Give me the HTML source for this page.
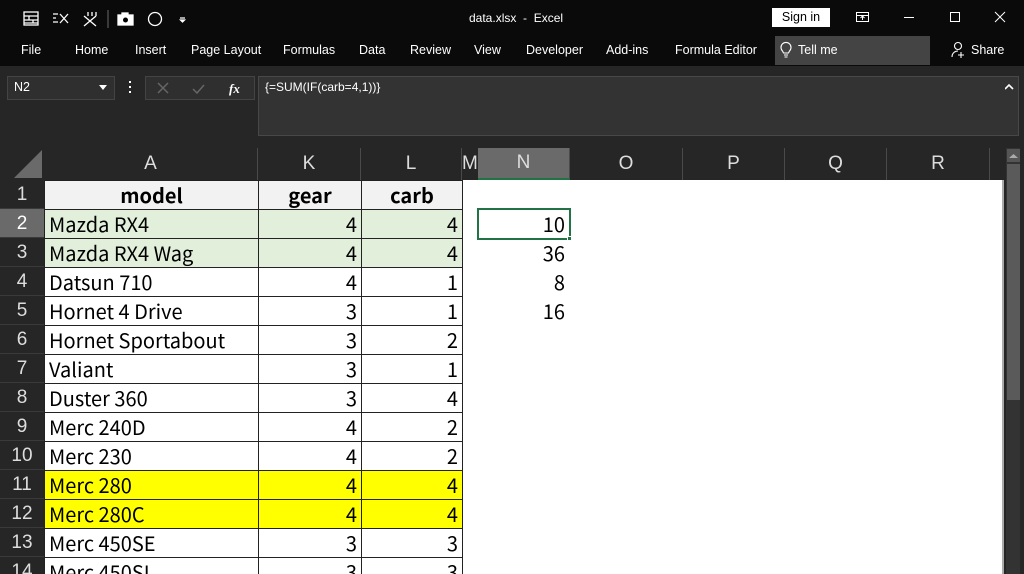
<!DOCTYPE html>
<html style="width:1024px;height:574px;overflow:hidden"><head><meta charset="utf-8"><style>
*{margin:0;padding:0;box-sizing:border-box}
body{width:1024px;height:574px;overflow:hidden;background:#262626;font-family:"Segoe UI","Liberation Sans","Noto Sans CJK KR",sans-serif;position:relative;color:#fff}
.a{position:absolute}
.t{font-size:12.5px;color:#fff;white-space:nowrap}
.hd{position:absolute;top:148px;height:32px;font-size:19px;color:#ddd;text-align:center;line-height:32px;border-right:1px solid #4a4a4a}
.rh{position:absolute;left:0;width:44px;height:29px;font-size:19px;color:#ddd;text-align:center;line-height:29px;border-bottom:1px solid #3a3a3a}
.c{position:absolute;height:30px;border:1px solid #222;font-size:20px;color:#000;line-height:28px;padding:0 4px;white-space:nowrap;overflow:hidden;font-family:"Noto Sans CJK KR","Liberation Sans",sans-serif}
.r{text-align:right}
</style></head><body>
<div class="a" style="left:0;top:0;width:1024px;height:66px;background:#0a0a0a"></div>
<svg class="a" style="left:20px;top:8px" width="180" height="22" viewBox="0 0 180 22" fill="none" stroke="#fff" stroke-width="1.3">
<rect x="4" y="4" width="14" height="13"/><path d="M4 8h14M4 12h14M4 15h14M9 8v4M13 12v3"/>
<path d="M33 6h5M33 10h3M33 14h5M40 6l8 9M48 6l-8 9"/>
<path d="M68 4v4M72 4v4M76 4v4M64 8l12 10M76 8l-12 10"/>
<line x1="88" y1="2" x2="88" y2="20" stroke="#555"/>
<rect x="98" y="7" width="15" height="10" fill="#fff"/><rect x="102" y="5" width="6" height="3" fill="#fff"/><circle cx="105.5" cy="12" r="2.5" fill="#000" stroke="none"/>
<circle cx="135" cy="11" r="6.5"/>
<path d="M160 10h5M160.5 12h4l-2 2z" fill="#fff"/>
</svg>
<div class="a t" style="left:469px;top:11px;font-size:12px">data.xlsx &nbsp;- &nbsp;Excel</div>
<div class="a" style="left:772px;top:8px;width:58px;height:19px;background:#fff;color:#000;font-size:12.5px;text-align:center;line-height:19px">Sign in</div>
<svg class="a" style="left:850px;top:8px" width="174" height="20" fill="none" stroke="#fff" stroke-width="1">
<rect x="6.5" y="4.5" width="12" height="9"/><path d="M6.5 7.5h12M12.5 12V8.5M10.5 10l2-2 2 2"/>
<path d="M54 9.5h10"/>
<rect x="100.5" y="4.5" width="9" height="9"/>
<path d="M145 4l10 10M155 4l-10 10"/>
</svg>
<div class="a t" style="left:21px;top:43px">File</div>
<div class="a t" style="left:75px;top:43px">Home</div>
<div class="a t" style="left:135px;top:43px">Insert</div>
<div class="a t" style="left:191px;top:43px">Page Layout</div>
<div class="a t" style="left:283px;top:43px">Formulas</div>
<div class="a t" style="left:359px;top:43px">Data</div>
<div class="a t" style="left:410px;top:43px">Review</div>
<div class="a t" style="left:474px;top:43px">View</div>
<div class="a t" style="left:526px;top:43px">Developer</div>
<div class="a t" style="left:606px;top:43px">Add-ins</div>
<div class="a t" style="left:675px;top:43px">Formula Editor</div>
<div class="a" style="left:775px;top:36px;width:155px;height:29px;background:#444"></div>
<svg class="a" style="left:779px;top:40px" width="14" height="20" fill="none" stroke="#fff" stroke-width="1.1"><path d="M3.5 11a5 5 0 1 1 7 0l-1 2h-5z"/><path d="M5 15h4M5.5 17h3"/></svg>
<div class="a t" style="left:798px;top:43px">Tell me</div>
<svg class="a" style="left:951px;top:41px" width="16" height="18" fill="none" stroke="#fff" stroke-width="1.1"><circle cx="7" cy="5" r="3.5"/><path d="M1 16c0-4 3-6 6-6M10 11v6M7 14h6"/></svg>
<div class="a t" style="left:971px;top:43px">Share</div>
<div class="a" style="left:7px;top:76px;width:108px;height:24px;background:#2f2f2f;border:1px solid #444"></div>
<div class="a t" style="left:14px;top:80px">N2</div>
<svg class="a" style="left:99px;top:85px" width="9" height="5"><path d="M0 0h8l-4 5z" fill="#fff"/></svg>
<div class="a" style="left:129px;top:81px;width:2px;height:2px;background:#fff;box-shadow:0 5px #fff,0 10px #fff"></div>
<div class="a" style="left:145px;top:76px;width:110px;height:24px;background:#2f2f2f;border:1px solid #444"></div>
<svg class="a" style="left:155px;top:80px" width="95" height="16" fill="none" stroke="#666" stroke-width="1.5"><path d="M3 3l10 10M13 3L3 13M38 9l4 4 7-8"/><text x="74" y="13" fill="#fff" stroke="none" font-size="13" font-style="italic" font-family="Liberation Serif" font-weight="bold">fx</text></svg>
<div class="a" style="left:258px;top:76px;width:761px;height:60px;background:#333;border:1px solid #484848"></div>
<div class="a t" style="left:265px;top:80px;font-size:12px">{=SUM(IF(carb=4,1))}</div>
<svg class="a" style="left:1005px;top:84px" width="9" height="6"><path d="M0 5l4-4 4 4" stroke="#fff" stroke-width="1.6" fill="none"/></svg>
<svg class="a" style="left:14px;top:150px" width="28" height="28"><path d="M28 0v28H0z" fill="#6a6a6a"/></svg>
<div class="hd" style="left:44px;width:214px">A</div>
<div class="hd" style="left:258px;width:103px">K</div>
<div class="hd" style="left:361px;width:101px">L</div>
<div class="hd" style="left:462px;width:16px;text-align:left;border:none">M</div>
<div class="hd" style="left:478px;width:92px;background:#6a6a6a;border-bottom:2px solid #217346;line-height:30px">N</div>
<div class="hd" style="left:570px;width:113px">O</div>
<div class="hd" style="left:683px;width:102px">P</div>
<div class="hd" style="left:785px;width:102px">Q</div>
<div class="hd" style="left:887px;width:103px">R</div>
<div class="a" style="left:44px;top:180px;width:958px;height:394px;background:#fff"></div>
<div class="a" style="left:1002px;top:180px;width:2px;height:394px;background:#aaa"></div>
<div class="a" style="left:1006px;top:148px;width:14px;height:426px;background:#333"></div>
<div class="a" style="left:1007px;top:149px;width:13px;height:13px;background:#555"></div>
<svg class="a" style="left:1009px;top:153px" width="9" height="5"><path d="M0 5l4.5-4 4.5 4z" fill="#aaa"/></svg>
<div class="a" style="left:1007px;top:164px;width:13px;height:236px;background:#5a5a5a"></div>
<div id="g"></div>
<script>
var d=[["model","gear","carb"],["Mazda RX4",4,4],["Mazda RX4 Wag",4,4],["Datsun 710",4,1],["Hornet 4 Drive",3,1],["Hornet Sportabout",3,2],["Valiant",3,1],["Duster 360",3,4],["Merc 240D",4,2],["Merc 230",4,2],["Merc 280",4,4],["Merc 280C",4,4],["Merc 450SE",3,3],["Merc 450SL",3,3]];
var h="";
for(var i=0;i<d.length;i++){var y=180+i*29;
var bg=i==0?"#f2f2f2":(i<3?"#e2efda":(i==10||i==11?"#ffff00":"#fff"));
var hb=i==1?"background:#6a6a6a;color:#fff;":"";
h+='<div class="rh" style="top:'+y+'px;'+hb+'">'+(i+1)+'</div>';
var b=i==0?'font-weight:bold;text-align:center;':'';
h+='<div class="c" style="left:44px;top:'+y+'px;width:215px;background:'+bg+';'+b+'">'+d[i][0]+'</div>';
h+='<div class="c'+(i?' r':'')+'" style="left:258px;top:'+y+'px;width:104px;background:'+bg+';'+b+'">'+d[i][1]+'</div>';
h+='<div class="c'+(i?' r':'')+'" style="left:361px;top:'+y+'px;width:102px;background:'+bg+';'+b+'">'+d[i][2]+'</div>';}
var n=[10,36,8,16];
for(var j=0;j<4;j++)h+='<div class="c r" style="left:478px;top:'+(209+j*29)+'px;width:92px;border-color:transparent">'+n[j]+'</div>';
h+='<div class="a" style="left:477px;top:208px;width:94px;height:32px;border:2px solid #217346"></div><div class="a" style="left:567px;top:236px;width:5px;height:5px;background:#217346;border:1px solid #fff"></div>';
document.getElementById("g").innerHTML=h;
</script>
</body></html>
